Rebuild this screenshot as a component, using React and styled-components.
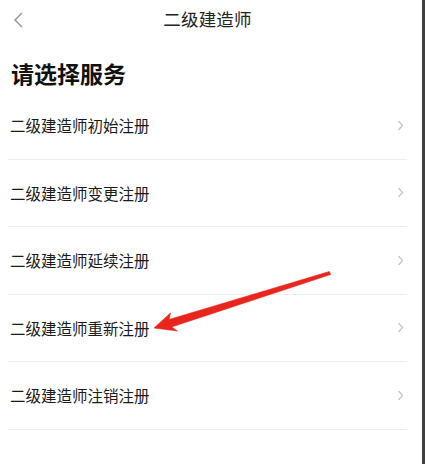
import React from "react";
import styled, { createGlobalStyle } from "styled-components";

const services = [
    "二级建造师初始注册",
    "二级建造师变更注册",
    "二级建造师延续注册",
    "二级建造师重新注册",
    "二级建造师注销注册",
];

const GlobalStyle = createGlobalStyle`
    html, body {
        margin: 0;
        padding: 0;
        background: #fff;
    }
    body {
        font-family: "Noto Sans CJK SC", "Noto Sans", sans-serif;
        color: #1c1c1c;
    }
`;

const BackIcon = () => (
    <svg width="12" height="16" viewBox="0 0 12 16">
        <polyline
            points="10,1 3,8 10,15"
            fill="none"
            stroke="#9a9a9a"
            strokeWidth="1.5"
        />
    </svg>
);

const ChevronIcon = () => (
    <svg width="7" height="11" viewBox="0 0 7 11">
        <polyline
            points="1.5,1 5.5,5.5 1.5,10"
            fill="none"
            stroke="#c4c4c4"
            strokeWidth="1.3"
        />
    </svg>
);

// red pointer drawn over the list
const Arrow = () => (
    <ArrowLayer width="425" height="464" viewBox="0 0 425 464">
        <polygon
            points="154,328 170.5,313 169,319.5 329.4,271.5 330.6,274.5 171.6,327 177.5,331"
            fill="#e8261d"
            stroke="#e8261d"
            strokeWidth="0.6"
            strokeLinejoin="round"
        />
    </ArrowLayer>
);

export default function App() {
    return (
        <>
            <GlobalStyle />
            <Screen>
                <Main>
                    <Header>
                        <BackButton>
                            <BackIcon />
                        </BackButton>
                        <HeaderTitle>二级建造师</HeaderTitle>
                    </Header>
                    <Heading>请选择服务</Heading>
                    <List>
                        {services.map((name) => (
                            <Row key={name}>
                                <RowText>{name}</RowText>
                                <ChevronIcon />
                            </Row>
                        ))}
                    </List>
                </Main>
                <ScrollEdge />
                <Arrow />
            </Screen>
        </>
    );
}

const Screen = styled.div`
    position: relative;
    width: 425px;
    height: 464px;
    display: flex;
    background: #fff;
    overflow: hidden;
`;

const Main = styled.div`
    width: 415px;
    display: flex;
    flex-direction: column;
`;

const ScrollEdge = styled.div`
    margin-left: auto;
    width: 3px;
    height: 100%;
    background: #3f3f3f;
`;

const Header = styled.div`
    position: relative;
    height: 36px;
    display: flex;
    align-items: center;
    justify-content: center;
`;

const BackButton = styled.div`
    position: absolute;
    left: 12px;
    top: 12px;
    display: flex;
`;

const HeaderTitle = styled.div`
    font-size: 17.5px;
    color: #222;
    letter-spacing: 0.2px;
`;

const Heading = styled.div`
    margin: 22px 0 0 11px;
    font-size: 23px;
    line-height: 30px;
    font-weight: 700;
    color: #111;
`;

const List = styled.div`
    margin: 4px 8px 0 8px;
    display: flex;
    flex-direction: column;
`;

const Row = styled.div`
    height: 66.5px;
    display: flex;
    align-items: center;
    justify-content: space-between;
    padding: 0 3px 0 2px;
    border-bottom: 1px solid #eeeeee;
`;

const RowText = styled.div`
    font-size: 15.5px;
    color: #1a1a1a;
`;

const ArrowLayer = styled.svg`
    position: absolute;
    left: 0;
    top: 0;
    pointer-events: none;
`;
